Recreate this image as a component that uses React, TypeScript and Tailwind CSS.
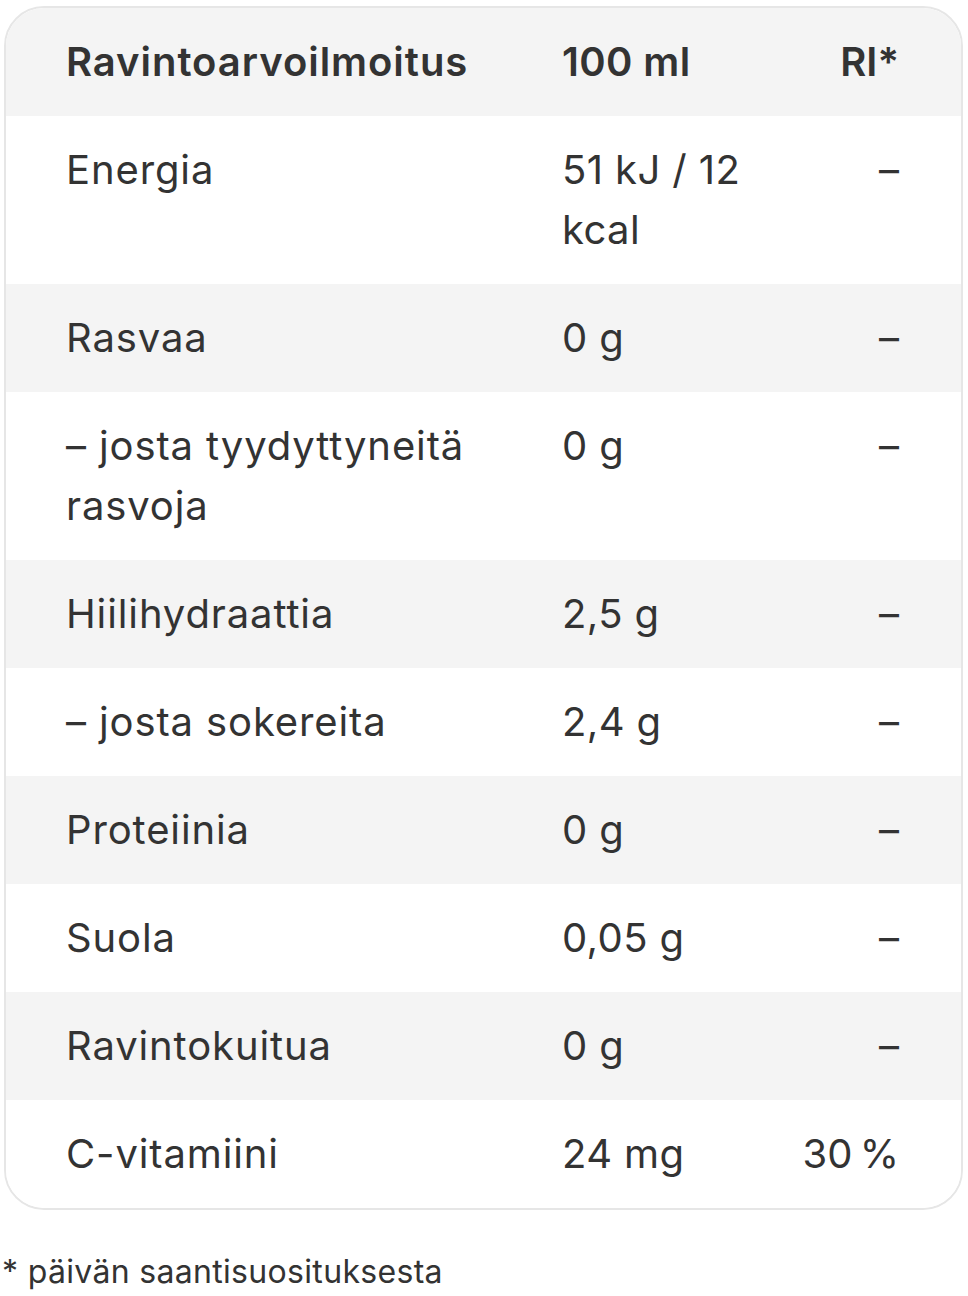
import React from "react";

const rows: { name: string; value: string; ri: string }[] = [
  { name: "Energia", value: "51 kJ / 12 kcal", ri: "–" },
  { name: "Rasvaa", value: "0 g", ri: "–" },
  { name: "– josta tyydyttyneitä rasvoja", value: "0 g", ri: "–" },
  { name: "Hiilihydraattia", value: "2,5 g", ri: "–" },
  { name: "– josta sokereita", value: "2,4 g", ri: "–" },
  { name: "Proteiinia", value: "0 g", ri: "–" },
  { name: "Suola", value: "0,05 g", ri: "–" },
  { name: "Ravintokuitua", value: "0 g", ri: "–" },
  { name: "C-vitamiini", value: "24 mg", ri: "30\u2009%" },
];

export default function App() {
  return (
    <div
      className="w-[968px] min-h-[1296px] bg-white text-[#333333]"
      style={{ fontFamily: "Inter, 'Noto Sans', sans-serif" }}
    >
      <div className="pt-[6px] pl-[4px] pr-[5px]">
        <div className="border-2 border-[#e6e6e6] rounded-[40px] overflow-hidden">
          <div className="grid grid-cols-[496px_220px_1fr] bg-[#f4f4f4] pl-[60px] pr-[62px] py-[24px] text-[40px] leading-[60px] font-semibold">
            <div className="tracking-[0.024em]">Ravintoarvoilmoitus</div>
            <div className="tracking-[0.01em]">100 ml</div>
            <div className="text-right">RI*</div>
          </div>
          {rows.map((r, i) => (
            <div
              key={r.name}
              className={`grid grid-cols-[496px_220px_1fr] pl-[60px] pr-[62px] py-[24px] text-[40px] leading-[60px] ${
                i % 2 === 0 ? "bg-white" : "bg-[#f4f4f4]"
              }`}
            >
              <div className="pr-[20px] tracking-[0.022em]">{r.name}</div>
              <div className="pr-[20px] tracking-[0.01em]">{r.value}</div>
              <div className="text-right">{r.ri}</div>
            </div>
          ))}
        </div>
      </div>
      <div className="pl-[2px] mt-[38px] text-[32px] leading-[48px] tracking-[0.01em]">
        * päivän saantisuosituksesta
      </div>
    </div>
  );
}
